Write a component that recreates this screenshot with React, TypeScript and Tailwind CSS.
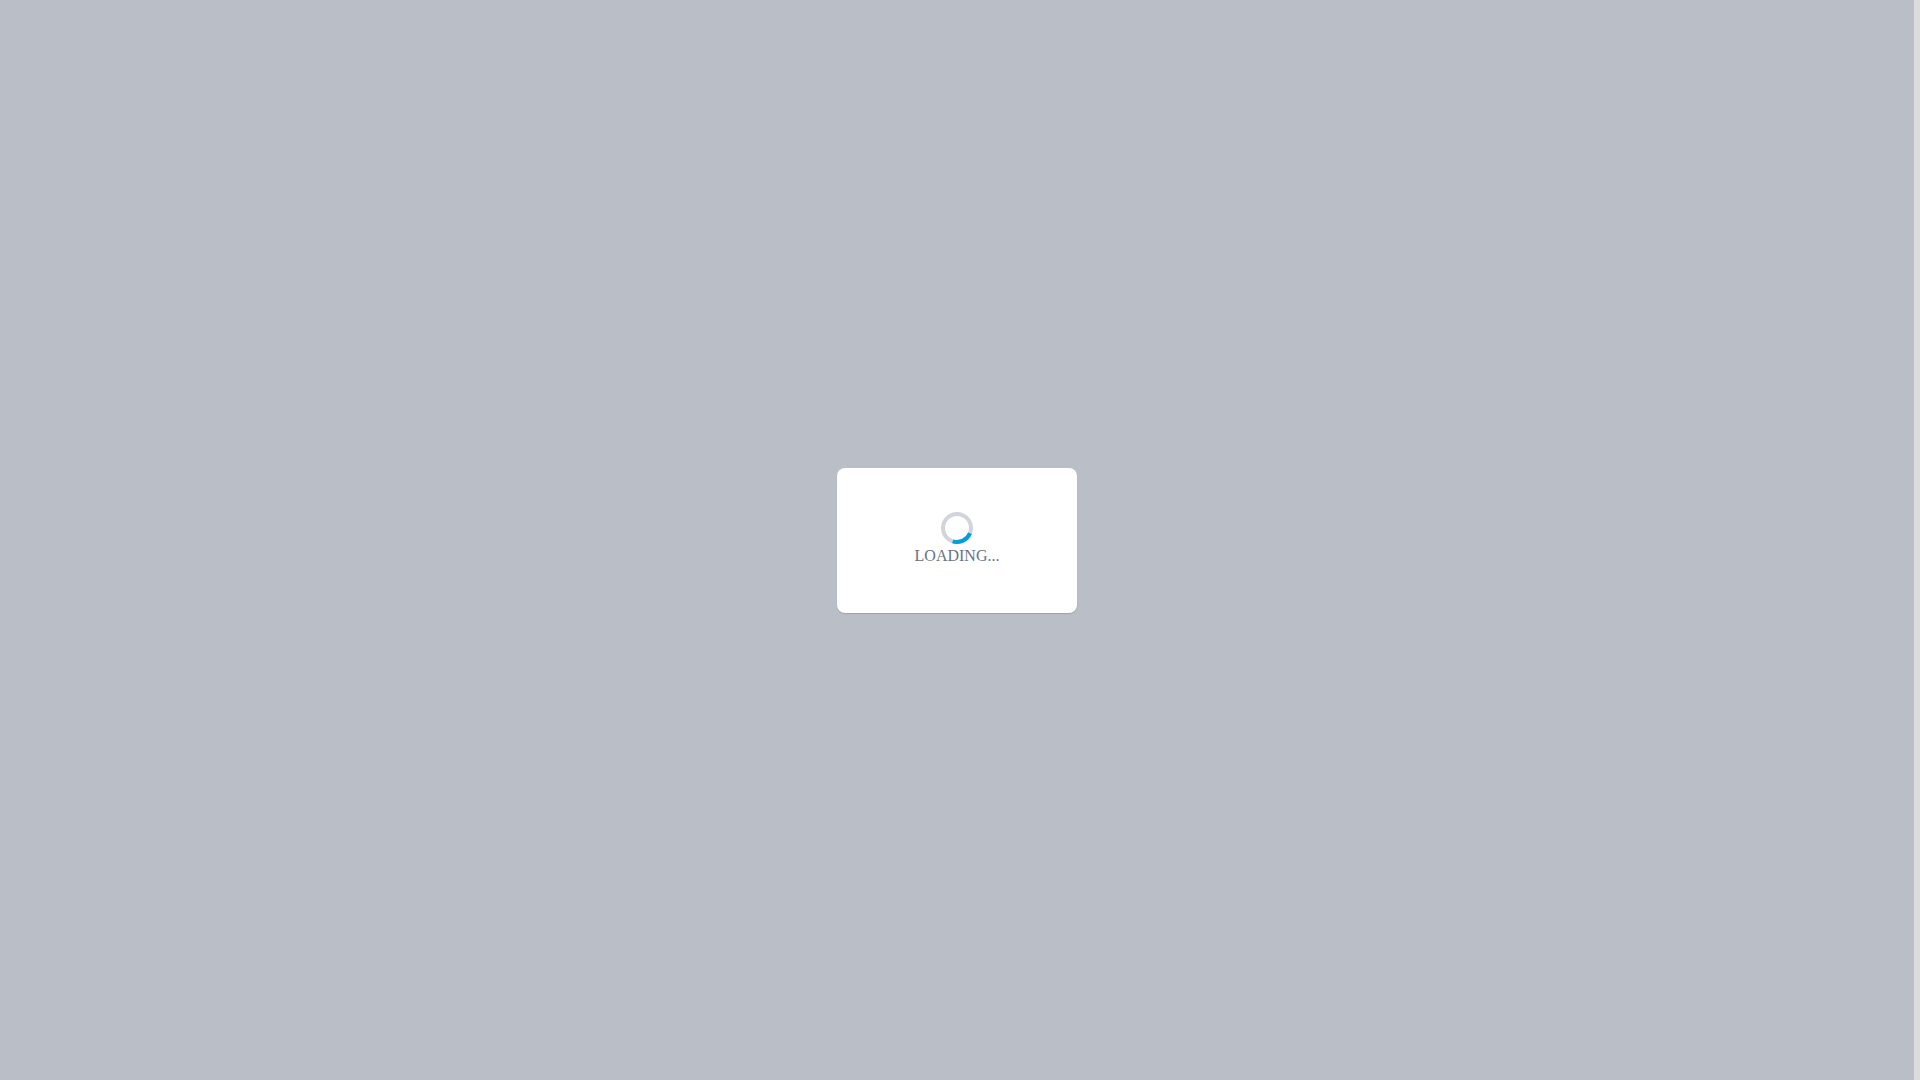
const Spinner = () => (
  <svg aria-hidden="true" className="size-8" viewBox="0 0 32 32" fill="none" strokeWidth="4">
    <circle cx="16" cy="16" r="14" stroke="#d1d5db" />
    <path d="M29 21.2A14 14 0 0 1 11.7 29.3" stroke="#009fdb" />
  </svg>
);

export default function App() {
  return (
    <div className="flex h-screen bg-[#dcdcdc] pr-[6px] font-['Liberation_Serif',serif]">
      <main className="flex flex-1 items-center justify-center bg-[#babec7]">
        <div
          role="status"
          className="flex min-h-[145px] w-60 flex-col items-center justify-center rounded-lg bg-white shadow-[0_1px_1px_rgba(0,0,0,0.15)]"
        >
          <Spinner />
          <p className="text-base text-[#6b7280]">LOADING...</p>
        </div>
      </main>
    </div>
  );
}
